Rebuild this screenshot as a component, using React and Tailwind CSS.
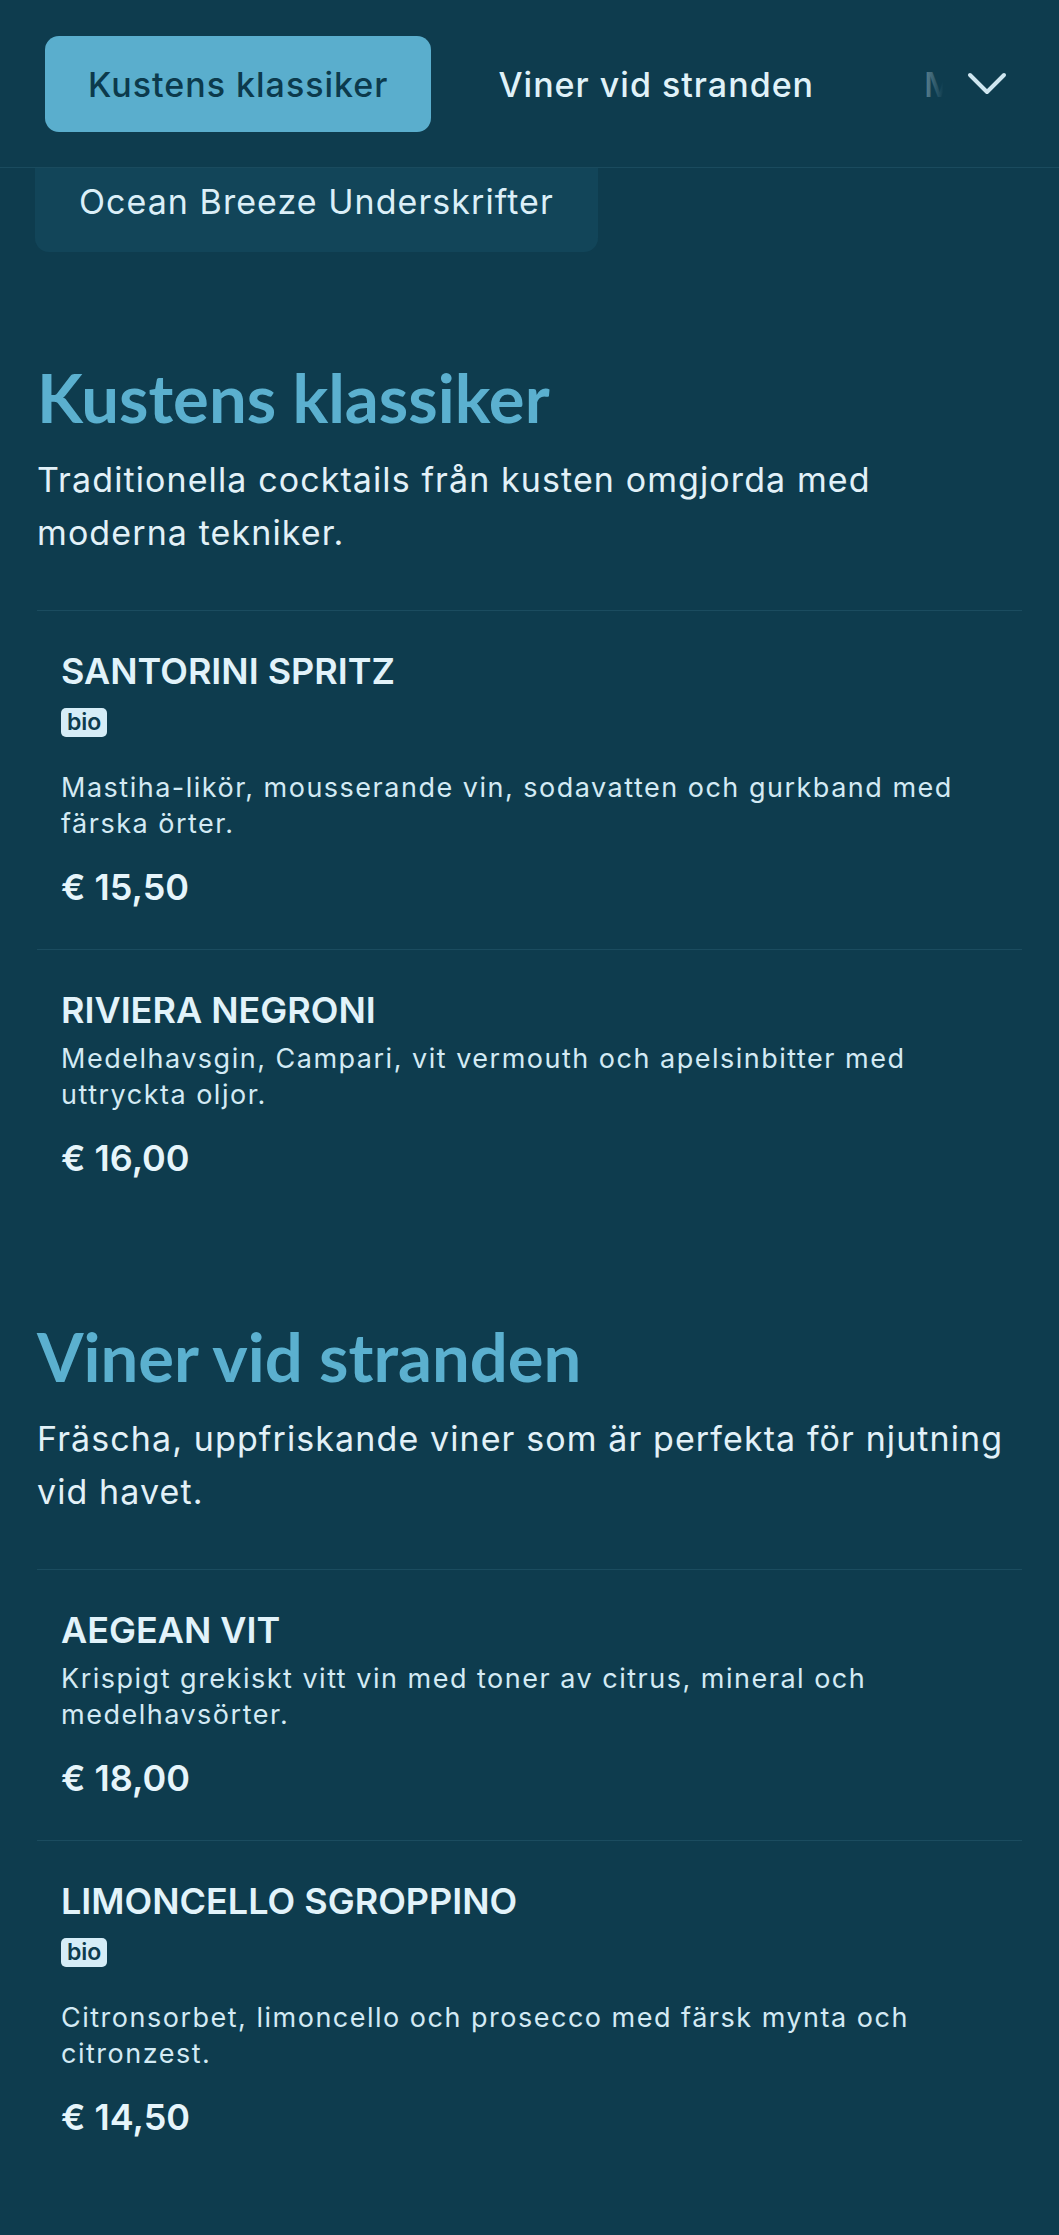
import React from "react";

const sections = [
  {
    title: "Kustens klassiker",
    desc: "Traditionella cocktails från kusten omgjorda med moderna tekniker.",
    items: [
      {
        name: "SANTORINI SPRITZ",
        bio: true,
        desc: "Mastiha-likör, mousserande vin, sodavatten och gurkband med färska örter.",
        price: "€ 15,50",
      },
      {
        name: "RIVIERA NEGRONI",
        desc: "Medelhavsgin, Campari, vit vermouth och apelsinbitter med uttryckta oljor.",
        price: "€ 16,00",
      },
    ],
  },
  {
    title: "Viner vid stranden",
    desc: "Fräscha, uppfriskande viner som är perfekta för njutning vid havet.",
    items: [
      {
        name: "AEGEAN VIT",
        desc: "Krispigt grekiskt vitt vin med toner av citrus, mineral och medelhavsörter.",
        price: "€ 18,00",
      },
      {
        name: "LIMONCELLO SGROPPINO",
        bio: true,
        desc: "Citronsorbet, limoncello och prosecco med färsk mynta och citronzest.",
        price: "€ 14,50",
      },
    ],
  },
];

function Item({ item }) {
  return (
    <li className="border-t border-[#1b4c5f] px-[24px] pt-[38px] pb-[40px]">
      <h3 className="text-[36px] leading-[44px] font-semibold text-[#e2f3fa]">{item.name}</h3>
      {item.bio && (
        <div className="mt-[15px] flex">
          <span className="h-[29px] px-[6px] rounded-[5px] bg-[#d6edf7] text-[#0e3c4e] text-[23px] leading-[29px] font-semibold">
            bio
          </span>
        </div>
      )}
      <p
        className={
          item.bio
            ? "mt-[33px] text-[27px] leading-[36px] tracking-[1.5px] text-[#d3eaf4]"
            : "mt-[9px] text-[27px] leading-[36px] tracking-[1.5px] text-[#d3eaf4]"
        }
      >
        {item.desc}
      </p>
      <div className="mt-[23px] text-[36px] leading-[44px] font-semibold text-[#e6f5fb]">{item.price}</div>
    </li>
  );
}

export default function App() {
  return (
    <div className="min-h-screen bg-[#0e3c4e] font-[Inter,sans-serif] pb-[40px]">
      <header className="relative border-b border-[#1a4b5e] pt-[36px] pb-[35px] overflow-hidden">
        <nav className="flex gap-[24px] pl-[45px] whitespace-nowrap tracking-[1px]">
          <button className="h-[96px] px-[43px] rounded-[14px] bg-[#5aaecd] text-[#0c3a4c] text-[34px] font-medium shrink-0 flex items-center">
            Kustens klassiker
          </button>
          <button className="h-[96px] px-[43px] rounded-[14px] text-[#e0f2f9] text-[34px] font-medium shrink-0 flex items-center">
            Viner vid stranden
          </button>
          <button className="h-[96px] px-[43px] rounded-[14px] text-[#e0f2f9] text-[34px] font-medium shrink-0 flex items-center">
            Mocktails
          </button>
        </nav>
        <div className="absolute top-0 bottom-0 right-0 w-[165px] flex items-center justify-end pr-[52px] bg-linear-to-r from-[#0e3c4e]/0 from-0% to-[#0e3c4e] to-30%">
          <svg width="40" height="24" viewBox="0 0 40 24" fill="none">
            <polyline
              points="3,3 20,20 37,3"
              stroke="#cfe6f0"
              strokeWidth="4"
              strokeLinecap="round"
              strokeLinejoin="round"
            />
          </svg>
        </div>
      </header>

      <div className="pl-[35px] flex">
        <button className="h-[84px] px-[44px] pt-[8px] rounded-b-[14px] bg-[#124559] text-[#dbeff8] text-[34px] tracking-[1.05px] font-normal flex items-start">
          Ocean Breeze Underskrifter
        </button>
      </div>

      <main className="px-[37px]">
        {sections.map((s, i) => (
          <section key={s.title} className={i === 0 ? "mt-[104px]" : "mt-[95px]"}>
            <h2 className="font-[Lato,sans-serif] font-bold text-[67px] leading-[82px] text-[#5bb0cf]">
              {s.title}
            </h2>
            <p className="mt-[15px] max-w-[970px] text-[34px] leading-[53px] tracking-[1.1px] text-[#e2f1f8]">
              {s.desc}
            </p>
            <ul className="mt-[51px]">
              {s.items.map((it) => (
                <Item key={it.name} item={it} />
              ))}
            </ul>
          </section>
        ))}
      </main>
    </div>
  );
}
